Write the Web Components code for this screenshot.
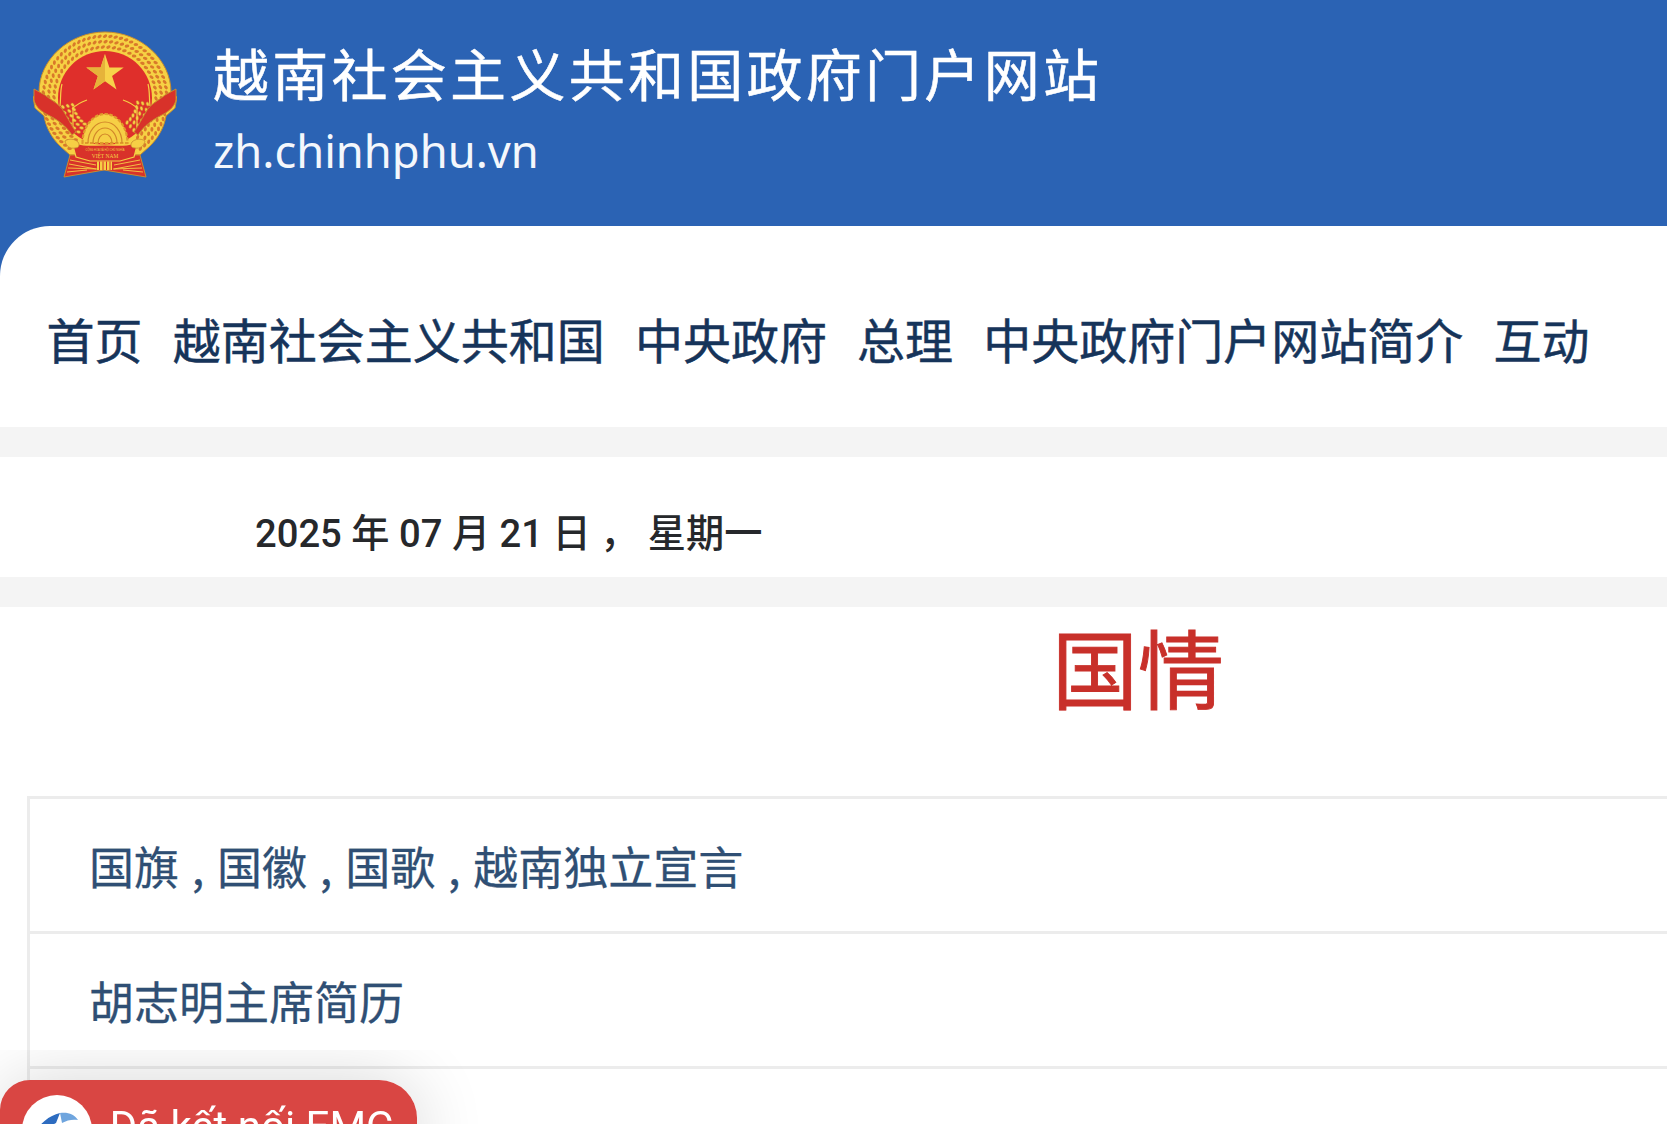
<!DOCTYPE html>
<html lang="zh">
<head>
<meta charset="utf-8">
<title>国情</title>
<style>
    html, body { margin: 0; height: 100%; overflow: hidden; background: #fff; }
    body { font-family: "Noto Sans CJK SC", "Noto Sans", sans-serif; }
</style>
</head>
<body>
<portal-page>
    <portal-header name="越南社会主义共和国政府门户网站" domain="zh.chinhphu.vn"></portal-header>
    <portal-nav>
        <a>首页</a><a>越南社会主义共和国</a><a>中央政府</a><a>总理</a><a>中央政府门户网站简介</a><a>互动</a>
    </portal-nav>
    <date-band>2025 年 07 月 21 日 ， 星期一</date-band>
    <page-title>国情</page-title>
    <link-list>
        <link-row>国旗 , 国徽 , 国歌 , 越南独立宣言</link-row>
        <link-row>胡志明主席简历</link-row>
        <link-row></link-row>
    </link-list>
</portal-page>
<connect-toast>Đã kết nối EMC</connect-toast>

<script>
// components

class PortalPage extends HTMLElement {
    constructor() {
        super();
        this.attachShadow({ mode: "open" });
        this.shadowRoot.innerHTML = `
            <style>
                :host {
                    display: block;
                    width: 2276px;
                    height: 1124px;
                    overflow: hidden;
                    background: #f4f4f4;
                }
            </style>
            <slot></slot>
        `;
    }
}

class PortalHeader extends HTMLElement {
    constructor() {
        super();
        this.attachShadow({ mode: "open" });
    }

    // grains laid on an arc round the middle of the emblem
    grains(r, from, to, step, rx, ry) {
        let out = "";
        for (let a = from; a <= to; a += step) {
            let x = (105 + r * Math.cos(a * Math.PI / 180)).toFixed(1);
            let y = (98 + r * Math.sin(a * Math.PI / 180)).toFixed(1);
            out += `<ellipse cx="${x}" cy="${y}" rx="${rx}" ry="${ry}" transform="rotate(${a + 60} ${x} ${y})"/>`;
        }
        return out;
    }

    connectedCallback() {
        let outer = "";
        for (let ring = 0; ring < 3; ring++) {
            outer += this.grains(51 + ring * 5.4, -235, 55, 6.2 - ring * 0.6, 2.3, 1.5);
        }
        let inner = "";
        for (let ring = 0; ring < 3; ring++) {
            inner += this.grains(33 + ring * 5, 128, 172, 8, 2.2, 1.5);
            inner += this.grains(33 + ring * 5, 8, 52, 8, 2.2, 1.5);
        }

        this.shadowRoot.innerHTML = `
            <style>
                :host {
                    display: flex;
                    align-items: flex-start;
                    gap: 36px;
                    height: 226px;
                    padding: 31px 0 0 33px;
                    box-sizing: border-box;
                    background: #2b63b4;
                    color: #fff;
                }
                svg { width: 144px; height: 148px; flex: none; }
                .text { display: flex; flex-direction: column; }
                .name {
                    font-size: 56px;
                    line-height: 80px;
                    letter-spacing: 3.28px;
                    margin-top: 1px;
                    white-space: nowrap;
                    -webkit-text-stroke: 0.5px #fff;
                }
                .domain {
                    font-family: "Noto Sans", sans-serif;
                    font-size: 45.3px;
                    line-height: 60px;
                    margin-top: 9px;
                    color: #f4f7fc;
                }
            </style>
            <svg viewBox="33 31 144 148">
                <path d="M105 32C141 32 171 60 171 92L177 97 175 108 166 116C164 128 158 138 150 146L140 155H70L60 146C52 138 46 128 44 116L35 108 33 97 39 92C39 60 69 32 105 32Z" fill="#f6d144" stroke="#c98c2e"/>
                <g fill="#d9792a">${outer}</g>
                <circle cx="105" cy="98" r="47" fill="#df2f2b"/>
                <path d="M105 54l4.400 13.600h14.300l-11.600 8.400 4.400 13.600-11.500-8.400-11.500 8.400 4.400-13.600-11.600-8.400h14.300z" fill="#f7d24a"/>
                <path d="M105 54v27l-11.500 8.600 4.400-13.600-11.600-8.400h14.300z" fill="#e6b33a"/>
                <g fill="#f6cf45" stroke="#c9672a" stroke-width=".5">${inner}</g>
                <g stroke="#f6cf45" stroke-width="1.200" fill="none">
                    <path d="M87 100c-6 2-11 5-15 9M123 100c6 2 11 5 15 9"/>
                    <path d="M73 107v26M137 107v26M60 106c1-8 0-14 2-22M150 106c-1-8 0-14-2-22"/>
                </g>
                <path d="M34 89L45 95C52 101 60 104 64 112 70 122 73 128 76 132L72 135C66 126 58 120 50 116 42 112 36 108 34 100Z" fill="#d8322a" stroke="#c98c2e"/>
                <path d="M176 89L165 95C158 101 150 104 146 112 140 122 137 128 134 132L138 135C144 126 152 120 160 116 168 112 174 108 176 100Z" fill="#d8322a" stroke="#c98c2e"/>
                <path d="M82.500 143a22.500 29 0 0 1 45 0z" fill="#f6cf45" stroke="#e09a2c" stroke-width="2.200" stroke-dasharray="3.500 1.500"/>
                <g fill="none" stroke="#d2862a" stroke-width="1.200">
                    <path d="M88 143a17 21 0 0 1 34 0M93 143a12 15 0 0 1 24 0M98 143a7 9 0 0 1 14 0"/>
                </g>
                <path d="M70 155L64 177 104 170 146 177 140 155Z" fill="#d8322a" stroke="#c98c2e"/>
                <g stroke="#f6cf45" stroke-width=".9" fill="none">
                    <path d="M70 160l26 5M69 164l27 5M68 168l29 1M67 172l20-2M140 160l-26 5M141 164l-27 5M142 168l-29 1M143 172l-20-2"/>
                </g>
                <path d="M72 142C82 146 88 145 105 145S128 146 138 142L134 157 120 161H90L76 157Z" fill="#d8322a" stroke="#f6cf45" stroke-width="1.200"/>
                <path d="M65 141c4-3 10-2 13 1 2 3 1 6-3 6-5 1-9-2-10-7zM145 141c-4-3-10-2-13 1-2 3-1 6 3 6 5 1 9-2 10-7z" fill="#f6cf45" stroke="#c98c2e" stroke-width=".8"/>
                <text x="105" y="150.500" text-anchor="middle" font-family="Liberation Sans, sans-serif" font-size="2.600" fill="#f6cf45">CỘNG HÒA XÃ HỘI CHỦ NGHĨA</text>
                <text x="105" y="157.500" text-anchor="middle" font-family="Liberation Serif, serif" font-size="5.500" fill="#f6cf45">VIỆT NAM</text>
                <path d="M97 161.500h15v8.500h-15z" fill="#f6cf45"/>
                <path d="M99.500 161.500v8.500M103 161.500v8.500M106.500 161.500v8.500M110 161.500v8.500" stroke="#d8322a" stroke-width="1"/>
            </svg>
            <div class="text">
                <div class="name">${this.getAttribute("name")}</div>
                <div class="domain">${this.getAttribute("domain")}</div>
            </div>
        `;
    }
}

class PortalNav extends HTMLElement {
    constructor() {
        super();
        this.attachShadow({ mode: "open" });
        this.shadowRoot.innerHTML = `
            <style>
                :host {
                    display: flex;
                    align-items: center;
                    gap: 30.2px;
                    height: 201px;
                    padding: 23px 0 0 46.5px;
                    box-sizing: border-box;
                    background: #fff;
                    position: relative;
                    font-size: 48px;
                    color: #16345a;
                    -webkit-text-stroke: 0.5px #16345a;
                    white-space: nowrap;
                }
                .corner {
                    position: absolute;
                    left: 0;
                    top: 0;
                    width: 50px;
                    height: 50px;
                    background: #2b63b4;
                }
                .corner::after {
                    content: "";
                    display: block;
                    width: 100%;
                    height: 100%;
                    background: #fff;
                    border-top-left-radius: 50px;
                }
                ::slotted(a) { display: block; }
            </style>
            <span class="corner"></span>
            <slot></slot>
        `;
    }
}

class DateBand extends HTMLElement {
    constructor() {
        super();
        this.attachShadow({ mode: "open" });
        this.shadowRoot.innerHTML = `
            <style>
                :host {
                    display: flex;
                    align-items: center;
                    height: 120px;
                    margin: 30px 0;
                    padding: 26px 0 0 255px;
                    box-sizing: border-box;
                    background: #fff;
                    font-family: Roboto, "Noto Sans CJK SC", sans-serif;
                    font-size: 38.2px;
                    font-weight: 500;
                    color: #26282b;
                    white-space: nowrap;
                }
            </style>
            <slot></slot>
        `;
    }
}

class PageTitle extends HTMLElement {
    constructor() {
        super();
        this.attachShadow({ mode: "open" });
        this.shadowRoot.innerHTML = `
            <style>
                :host {
                    display: block;
                    height: 189px;
                    background: #fff;
                    text-align: center;
                    font-size: 86px;
                    line-height: 118px;
                    color: #c8302a;
                    -webkit-text-stroke: 0.9px #c8302a;
                }
            </style>
            <slot></slot>
        `;
    }
}

class LinkList extends HTMLElement {
    constructor() {
        super();
        this.attachShadow({ mode: "open" });
        this.shadowRoot.innerHTML = `
            <style>
                :host {
                    display: block;
                    height: 328px;
                    background: #fff;
                    padding-left: 27px;
                }
                .box {
                    border: 3px solid #ececec;
                    border-bottom: 0;
                    height: 100%;
                    box-sizing: border-box;
                }
            </style>
            <div class="box"><slot></slot></div>
        `;
    }
}

class LinkRow extends HTMLElement {
    constructor() {
        super();
        this.attachShadow({ mode: "open" });
        this.shadowRoot.innerHTML = `
            <style>
                :host {
                    display: flex;
                    align-items: center;
                    height: 132px;
                    padding-left: 59px;
                    border-bottom: 3px solid #ececec;
                    font-size: 45px;
                    word-spacing: 2.7px;
                    color: #2f4f74;
                    -webkit-text-stroke: 0.3px #2f4f74;
                    white-space: nowrap;
                }
                :host(:last-child) { border-bottom: 0; }
            </style>
            <slot></slot>
        `;
    }
}

class ConnectToast extends HTMLElement {
    constructor() {
        super();
        this.attachShadow({ mode: "open" });
        this.shadowRoot.innerHTML = `
            <style>
                :host {
                    position: fixed;
                    left: 0;
                    top: 1080px;
                    width: 417px;
                    height: 100px;
                }
                .glow {
                    position: absolute;
                    inset: 0;
                    border-radius: 38px;
                    box-shadow: 0 0 70px rgba(0, 0, 0, 0.16);
                    clip-path: inset(-30px -100px -100px 0);
                }
                .pill {
                    position: relative;
                    height: 100%;
                    display: flex;
                    gap: 17px;
                    padding: 15px 0 0 22px;
                    box-sizing: border-box;
                    background: #d94643;
                    border-radius: 30px 38px 38px 38px;
                    font-family: Roboto, sans-serif;
                    font-size: 42px;
                    line-height: 60px;
                    color: #fff;
                    white-space: nowrap;
                }
                svg {
                    width: 70px;
                    height: 70px;
                    flex: none;
                    border-radius: 50%;
                    background: #fff;
                }
                span { display: block; margin-top: 2px; }
            </style>
            <div class="glow"></div>
            <div class="pill">
                <svg viewBox="0 0 70 70">
                    <path d="M13 40c4-12 14-19 25-22l-4 10-12 6z" fill="#2d6cc0"/>
                    <path d="M38 18c8-1 14 1 18 7-5-1-11 0-16 3z" fill="#6fa5de"/>
                    <path d="M13 40l9-6 3 14-12 3z" fill="#e6b13a"/>
                    <circle cx="36" cy="42" r="11" fill="#5a3a5e"/>
                </svg>
                <span><slot></slot></span>
            </div>
        `;
    }
}

customElements.define("portal-page", PortalPage);
customElements.define("portal-header", PortalHeader);
customElements.define("portal-nav", PortalNav);
customElements.define("date-band", DateBand);
customElements.define("page-title", PageTitle);
customElements.define("link-list", LinkList);
customElements.define("link-row", LinkRow);
customElements.define("connect-toast", ConnectToast);
</script>
</body>
</html>
